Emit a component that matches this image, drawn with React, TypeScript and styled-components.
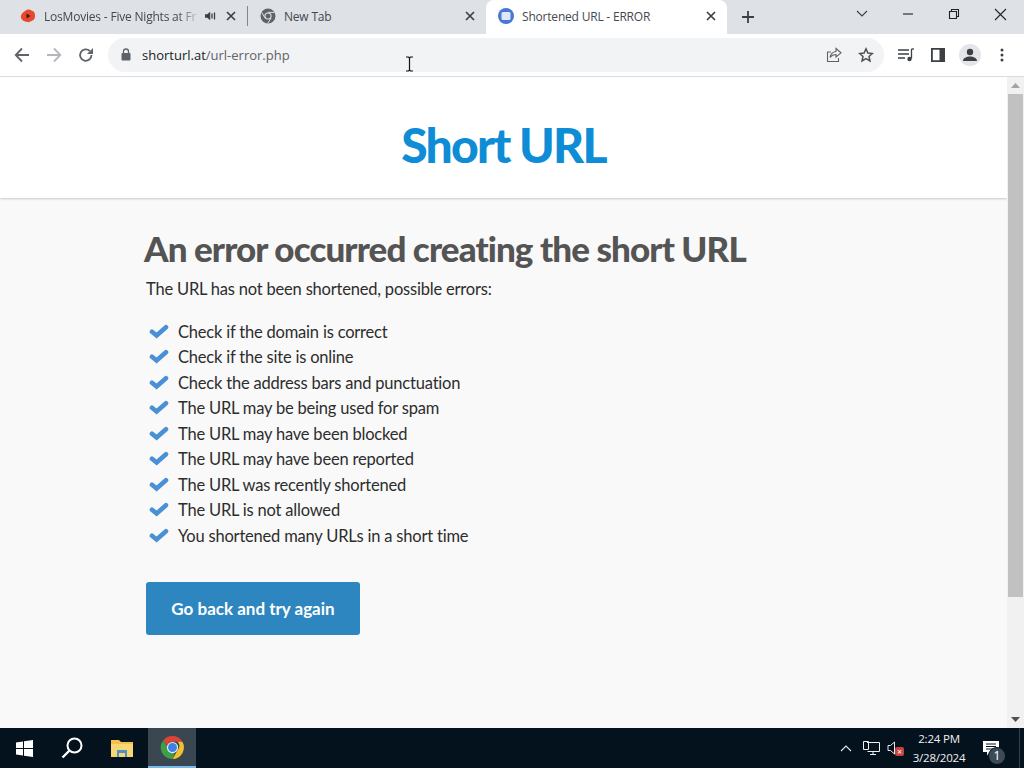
import styled, { createGlobalStyle } from "styled-components";

const errors = [
  "Check if the domain is correct",
  "Check if the site is online",
  "Check the address bars and punctuation",
  "The URL may be being used for spam",
  "The URL may have been blocked",
  "The URL may have been reported",
  "The URL was recently shortened",
  "The URL is not allowed",
  "You shortened many URLs in a short time",
];

const CloseIcon = ({ color = "#3c4043" }: { color?: string }) => (
  <svg width="10" height="10" viewBox="0 0 10 10">
    <path d="M1 1l8 8M9 1l-8 8" stroke={color} strokeWidth="1.7" fill="none" />
  </svg>
);

const ChromeLogo = ({ size }: { size: number }) => (
  <svg width={size} height={size} viewBox="0 0 24 24">
    <path d="M12 1a11 11 0 0 1 9.500 5.500H12a5.500 5.500 0 0 0-5.200 3.700L3.300 5A11 11 0 0 1 12 1z" fill="#db4437" />
    <path d="M21.500 6.500A11 11 0 0 1 12 23l4.800-8.200a5.500 5.500 0 0 0 0-8.300z" fill="#f5c02e" />
    <path d="M12 23A11 11 0 0 1 3.300 5l4.800 8.600A5.500 5.500 0 0 0 14 17.200z" fill="#3f9e48" />
    <circle cx="12" cy="12" r="5.400" fill="#e9eef5" />
    <circle cx="12" cy="12" r="4.300" fill="#3f7fe6" />
  </svg>
);

const App = () => {
  return (
    <Screen>
      <GlobalStyle />
      <TabStrip>
        <Tab $width={239}>
          <svg width="16" height="16" viewBox="0 0 16 16">
            <path d="M8.500 1.500c2 0 2.500 1 4 1.500s2.500 2 2.500 4.500-.5 4-2.500 5-3 2-5 1.500-4-.5-5.500-2.500S.5 8.500 1.500 6.500s2-2.500 3.500-3.500 2-1.500 3.500-1.500z" fill="#e8492e" />
            <path d="M6.500 5.500v5l4-2.500z" fill="#3a1a12" />
          </svg>
          <TabTitle $fade>LosMovies - Five Nights at Fr</TabTitle>
          <svg width="11" height="10" viewBox="0 0 11 10">
            <path d="M0 3.300h2.200L5.200.8v8.400L2.200 6.700H0z" fill="#3c4043" />
            <path d="M7 2.500v5M9.500 1.500v7" stroke="#3c4043" strokeWidth="1.300" />
          </svg>
          <CloseSlot><CloseIcon /></CloseSlot>
        </Tab>
        <TabDivider />
        <Tab $width={238}>
          <svg width="16" height="16" viewBox="0 0 16 16">
            <circle cx="8" cy="8" r="7.500" fill="#5f6368" />
            <circle cx="8" cy="8" r="3.600" fill="#dee1e6" />
            <circle cx="8" cy="8" r="2.500" fill="#5f6368" />
            <path d="M8 4.400h6.400M5 10l-3.200-5.500M11 10l-3.200 5.300" stroke="#dee1e6" strokeWidth="1" />
          </svg>
          <TabTitle>New Tab</TabTitle>
          <CloseSlot><CloseIcon /></CloseSlot>
        </Tab>
        <ActiveTab>
          <svg width="16" height="16" viewBox="0 0 16 16">
            <circle cx="8" cy="8" r="8" fill="#4a76d8" />
            <rect x="3.500" y="4" width="9" height="8" rx="1.500" fill="#dfe8fb" />
          </svg>
          <TabTitle>Shortened URL - ERROR</TabTitle>
          <CloseSlot><CloseIcon /></CloseSlot>
        </ActiveTab>
        <NewTabButton>
          <svg width="14" height="14" viewBox="0 0 14 14">
            <path d="M7 1v12M1 7h12" stroke="#3c4043" strokeWidth="1.800" />
          </svg>
        </NewTabButton>
        <WindowControls>
          <WindowButton>
            <svg width="12" height="8" viewBox="0 0 12 8">
              <path d="M1 1l5 5 5-5" stroke="#3c4043" strokeWidth="1.100" fill="none" />
            </svg>
          </WindowButton>
          <WindowButton>
            <svg width="12" height="12" viewBox="0 0 12 12">
              <path d="M1 6h10" stroke="#222" strokeWidth="1.100" />
            </svg>
          </WindowButton>
          <WindowButton>
            <svg width="12" height="12" viewBox="0 0 12 12">
              <path d="M1.500 3.500h7v7h-7zM3.500 3.500v-2h7v7h-2" stroke="#222" strokeWidth="1.100" fill="none" />
            </svg>
          </WindowButton>
          <WindowButton>
            <svg width="13" height="13" viewBox="0 0 13 13">
              <path d="M1 1l11 11M12 1L1 12" stroke="#222" strokeWidth="1.100" />
            </svg>
          </WindowButton>
        </WindowControls>
      </TabStrip>

      <Toolbar>
        <NavButton>
          <svg width="16" height="16" viewBox="0 0 16 16">
            <path d="M15 8H2M8 1.500L1.700 8 8 14.500" stroke="#5f6368" strokeWidth="1.800" fill="none" />
          </svg>
        </NavButton>
        <NavButton>
          <svg width="16" height="16" viewBox="0 0 16 16">
            <path d="M1 8h13M8 1.500L14.300 8 8 14.500" stroke="#b4b7bb" strokeWidth="1.800" fill="none" />
          </svg>
        </NavButton>
        <NavButton>
          <svg width="16" height="16" viewBox="0 0 16 16">
            <path d="M13.500 8a5.700 5.700 0 1 1-1.700-4" stroke="#5f6368" strokeWidth="1.800" fill="none" />
            <path d="M15 1v6H9z" fill="#5f6368" />
          </svg>
        </NavButton>
        <Omnibox>
          <svg width="10" height="13" viewBox="0 0 10 13">
            <path d="M2.500 5V3.500a2.500 2.500 0 0 1 5 0V5" stroke="#5f6368" strokeWidth="1.300" fill="none" />
            <rect x="0.500" y="5" width="9" height="7.500" rx="1" fill="#5f6368" />
          </svg>
          <Url>shorturl.at<UrlPath>/url-error.php</UrlPath></Url>
          <OmniboxActions>
            <svg width="16" height="16" viewBox="0 0 16 16">
              <path d="M5 5H1.500v9.500h11V11" stroke="#5f6368" strokeWidth="1.100" fill="none" />
              <path d="M10 1.500l5 4.300-5 4.200V7.500c-3 0-4.500 1-6 3 .5-3.500 2.500-5.500 6-6z" stroke="#5f6368" strokeWidth="1.100" fill="none" />
            </svg>
            <svg width="16" height="16" viewBox="0 0 16 16">
              <path d="M8 1.800l1.900 4.200 4.500.5-3.400 3 1 4.500L8 11.700 4 14l1-4.500-3.400-3 4.500-.5z" stroke="#4d5156" strokeWidth="1.500" fill="none" />
            </svg>
          </OmniboxActions>
        </Omnibox>
        <ToolbarIcons>
          <ToolbarIcon>
            <svg width="16" height="14" viewBox="0 0 16 14">
              <path d="M0 2h11M0 6h11M0 10h7" stroke="#3c4043" strokeWidth="1.300" />
              <path d="M13.500 1v9.500" stroke="#3c4043" strokeWidth="1.300" />
              <path d="M13.500 1H16" stroke="#3c4043" strokeWidth="1.300" />
              <circle cx="11.500" cy="11" r="2.200" fill="#3c4043" />
            </svg>
          </ToolbarIcon>
          <ToolbarIcon>
            <svg width="14" height="14" viewBox="0 0 14 14">
              <path d="M0 0h14v14H0zM1.800 1.800v10.400h6.700V1.800z" fill="#3c4043" fillRule="evenodd" />
            </svg>
          </ToolbarIcon>
          <Avatar>
            <svg width="14" height="14" viewBox="0 0 14 14">
              <circle cx="7" cy="4" r="3.200" fill="#3c4043" />
              <path d="M0 13c0-3 3.500-4.500 7-4.500S14 10 14 13z" fill="#3c4043" />
            </svg>
          </Avatar>
          <ToolbarIcon>
            <svg width="4" height="14" viewBox="0 0 4 14">
              <circle cx="2" cy="2" r="1.500" fill="#3c4043" />
              <circle cx="2" cy="7" r="1.500" fill="#3c4043" />
              <circle cx="2" cy="12" r="1.500" fill="#3c4043" />
            </svg>
          </ToolbarIcon>
        </ToolbarIcons>
        <TextCursor>
          <svg width="9" height="16" viewBox="0 0 9 16">
            <path d="M1 1h2.500L4.500 2l1-1H8M1 15h2.500l1-1 1 1H8M4.500 2v12" stroke="#111" strokeWidth="1.200" fill="none" />
          </svg>
        </TextCursor>
      </Toolbar>

      <Viewport>
        <Page>
          <Header>
            <Logo>Short URL</Logo>
          </Header>
          <Content>
            <Title>An error occurred creating the short URL</Title>
            <Lead>The URL has not been shortened, possible errors:</Lead>
            <ErrorList>
              {errors.map((error) => (
                <ErrorItem key={error}>
                  <svg width="20" height="15" viewBox="0 0 20 15">
                    <path d="M3 7.800L7.600 11.500 17 3.300" stroke="#4a90d6" strokeWidth="4.600" strokeLinecap="round" strokeLinejoin="miter" fill="none" />
                  </svg>
                  {error}
                </ErrorItem>
              ))}
            </ErrorList>
            <BackButton>Go back and try again</BackButton>
          </Content>
        </Page>
        <Scrollbar>
          <ScrollArrow>
            <svg width="9" height="5" viewBox="0 0 9 5"><path d="M4.500 0L9 5H0z" fill="#a3a3a3" /></svg>
          </ScrollArrow>
          <ScrollThumb />
          <ScrollArrow>
            <svg width="9" height="5" viewBox="0 0 9 5"><path d="M0 0h9L4.500 5z" fill="#505050" /></svg>
          </ScrollArrow>
        </Scrollbar>
      </Viewport>

      <Taskbar>
        <TaskButton $width={48}>
          <svg width="17" height="17" viewBox="0 0 17 17">
            <path d="M0 2.400L7 1.400V8H0zM8 1.300L17 0v8H8zM0 9h7v6.600l-7-1zM8 9h9v8l-9-1.300z" fill="#fff" />
          </svg>
        </TaskButton>
        <TaskButton $width={48}>
          <svg width="22" height="22" viewBox="0 0 22 22">
            <circle cx="13.500" cy="8.500" r="7" stroke="#fff" strokeWidth="2" fill="none" />
            <path d="M8.500 13.500L1.500 20.500" stroke="#fff" strokeWidth="2.400" />
          </svg>
        </TaskButton>
        <TaskButton $width={52}>
          <svg width="22" height="18" viewBox="0 0 22 18">
            <path d="M0 1h8l2 2h12v14H0z" fill="#f3c04f" />
            <path d="M0 5h22v13H0z" fill="#f7d774" />
            <path d="M6 11h10v7h-2v-4H8v4H6z" fill="#4f90c8" />
          </svg>
        </TaskButton>
        <ActiveTaskButton>
          <ChromeLogo size={25} />
        </ActiveTaskButton>
        <Tray>
          <svg width="12" height="7" viewBox="0 0 12 7">
            <path d="M1 6l5-5 5 5" stroke="#e8e8e8" strokeWidth="1.100" fill="none" />
          </svg>
          <NetworkSlot>
            <svg width="17" height="14" viewBox="0 0 17 14">
              <path d="M4 1.500h12.500v9h-12M10 10.500v3M7 13.500h6M.5.500h5v8h-5z" stroke="#f0f0f0" strokeWidth="1" fill="#06141f" />
            </svg>
          </NetworkSlot>
          <VolumeIcon>
            <svg width="16" height="14" viewBox="0 0 16 14">
              <path d="M1 4.500h2.500L7.500 1v12l-4-3.500H1z" stroke="#e8e8e8" strokeWidth="1" fill="none" />
            </svg>
            <MutedBadge>×</MutedBadge>
          </VolumeIcon>
          <Clock>
            <span>2:24 PM</span>
            <span>3/28/2024</span>
          </Clock>
          <NotificationIcon>
            <svg width="16" height="15" viewBox="0 0 16 15">
              <path d="M0 0h16v11H7l-3 3.500V11H0z" fill="#fff" />
              <path d="M3 3h10M3 5.500h10M3 8h7" stroke="#06141f" strokeWidth="1" />
            </svg>
            <NotificationCount>1</NotificationCount>
          </NotificationIcon>
          <ShowDesktop />
        </Tray>
      </Taskbar>
    </Screen>
  );
};

export default App;

const GlobalStyle = createGlobalStyle`
  html, body {
    margin: 0;
    padding: 0;
    height: 100%;
    overflow: hidden;
  }
  * {
    box-sizing: border-box;
  }
`;
const Screen = styled.div`
  width: 1024px;
  height: 768px;
  display: flex;
  flex-direction: column;
  font-family: "Noto Sans", "Liberation Sans", sans-serif;
`;
const TabStrip = styled.div`
  height: 34px;
  flex: none;
  padding-left: 8px;
  display: flex;
  align-items: stretch;
  background: #dee1e6;
  font-family: "Open Sans", "Noto Sans", sans-serif;
`;
const Tab = styled.div<{ $width: number }>`
  width: ${(p) => p.$width}px;
  flex: none;
  padding: 0 8px 2px 12px;
  display: flex;
  align-items: center;
`;
const ActiveTab = styled(Tab).attrs({ $width: 241 })`
  background: #ffffff;
  border-radius: 8px 8px 0 0;
`;
const TabDivider = styled.div`
  width: 1px;
  height: 20px;
  margin-bottom: 2px;
  align-self: center;
  flex: none;
  background: #80868b;
`;
const TabTitle = styled.span<{ $fade?: boolean }>`
  flex: 1;
  min-width: 0;
  margin-left: 8px;
  font-size: 12px;
  letter-spacing: -0.2px;
  color: #45494e;
  white-space: nowrap;
  ${(p) =>
    p.$fade &&
    `
    -webkit-mask-image: linear-gradient(to right, #000 85%, transparent 100%);
    margin-right: 4px;
  `}
`;
const CloseSlot = styled.span`
  width: 16px;
  margin-left: 7px;
  flex: none;
  display: flex;
  align-items: center;
  justify-content: center;
`;
const NewTabButton = styled.div`
  width: 42px;
  flex: none;
  display: flex;
  align-items: center;
  justify-content: center;
`;
const WindowControls = styled.div`
  margin-left: auto;
  padding-right: 1px;
  display: flex;
  align-items: flex-start;
`;
const WindowButton = styled.div`
  width: 46px;
  height: 28px;
  display: flex;
  align-items: center;
  justify-content: center;
`;
const Toolbar = styled.div`
  position: relative;
  height: 43px;
  flex: none;
  padding: 4px 0 5px 6px;
  display: flex;
  align-items: center;
  background: #ffffff;
  border-bottom: 1px solid #dadce0;
`;
const NavButton = styled.div`
  width: 32px;
  height: 32px;
  flex: none;
  display: flex;
  align-items: center;
  justify-content: center;
`;
const Omnibox = styled.div`
  width: 776px;
  height: 34px;
  margin-left: 6px;
  padding-left: 13px;
  flex: none;
  display: flex;
  align-items: center;
  background: #f1f3f4;
  border-radius: 17px;
`;
const Url = styled.span`
  margin-left: 11px;
  font-family: "Open Sans", "Noto Sans", sans-serif;
  font-size: 13px;
  color: #202124;
`;
const UrlPath = styled.span`
  color: #5f6368;
`;
const OmniboxActions = styled.div`
  margin-left: auto;
  padding-right: 10px;
  display: flex;
  gap: 16px;
`;
const ToolbarIcons = styled.div`
  flex: 1;
  display: flex;
  align-items: center;
  padding-left: 6px;
`;
const ToolbarIcon = styled.div`
  width: 32px;
  height: 32px;
  display: flex;
  align-items: center;
  justify-content: center;
`;
const Avatar = styled(ToolbarIcon)`
  width: 22px;
  height: 22px;
  margin: 0 5px;
  border-radius: 50%;
  background: #e3e5e8;
`;
const TextCursor = styled.div`
  position: absolute;
  left: 405px;
  top: 22px;
  display: flex;
`;
const Viewport = styled.div`
  flex: 1;
  min-height: 0;
  display: flex;
`;
const Page = styled.main`
  flex: 1;
  min-width: 0;
  display: flex;
  flex-direction: column;
  background: #f9f9f9;
`;
const Header = styled.header`
  height: 121px;
  padding-top: 15px;
  flex: none;
  display: flex;
  align-items: center;
  justify-content: center;
  background: #ffffff;
  box-shadow: 0 1px 2px rgba(0, 0, 0, 0.2);
`;
const Logo = styled.div`
  font-family: Lato, sans-serif;
  font-size: 48px;
  line-height: 60px;
  font-weight: 900;
  letter-spacing: -1.8px;
  color: #0e8dd6;
`;
const Content = styled.div`
  padding: 28px 0 0 144px;
  display: flex;
  flex-direction: column;
  align-items: flex-start;
`;
const Title = styled.h1`
  margin: 0;
  font-family: Lato, sans-serif;
  font-size: 35px;
  line-height: 44px;
  font-weight: 900;
  letter-spacing: -0.9px;
  color: #545454;
`;
const Lead = styled.p`
  margin: 7px 0 0 2px;
  font-family: Lato, sans-serif;
  font-size: 16.5px;
  line-height: 24px;
  letter-spacing: -0.2px;
  color: #2d2d2d;
`;
const ErrorList = styled.ul`
  margin: 18px 0 0 2px;
  padding: 0;
  list-style: none;
`;
const ErrorItem = styled.li`
  height: 25.5px;
  display: flex;
  align-items: center;
  gap: 9px;
  font-family: Lato, sans-serif;
  font-size: 16.5px;
  letter-spacing: -0.2px;
  color: #2d2d2d;
  svg {
    flex: none;
    margin: -1px 0 0 3px;
  }
`;
const BackButton = styled.button`
  width: 214px;
  height: 53px;
  margin: 33px 0 0 2px;
  border: none;
  border-radius: 3px;
  background: #2e86c1;
  color: #ffffff;
  font-family: Lato, sans-serif;
  font-size: 17px;
  font-weight: 700;
`;
const Scrollbar = styled.div`
  width: 17px;
  flex: none;
  display: flex;
  flex-direction: column;
  background: #f1f1f1;
`;
const ScrollArrow = styled.div`
  height: 17px;
  flex: none;
  display: flex;
  align-items: center;
  justify-content: center;
`;
const ScrollThumb = styled.div`
  height: 503px;
  margin: 0 1px auto;
  background: #c1c1c1;
`;
const Taskbar = styled.footer`
  height: 40px;
  flex: none;
  display: flex;
  align-items: stretch;
  background: #04121d;
`;
const TaskButton = styled.div<{ $width: number }>`
  width: ${(p) => p.$width}px;
  flex: none;
  display: flex;
  align-items: center;
  justify-content: center;
`;
const ActiveTaskButton = styled(TaskButton).attrs({ $width: 48 })`
  background: #3a4650;
  border-bottom: 2px solid #76b9ed;
`;
const Tray = styled.div`
  margin-left: auto;
  display: flex;
  align-items: center;
  color: #f0f0f0;
  svg {
    flex: none;
  }
`;
const NetworkSlot = styled.div`
  margin-left: 11px;
  display: flex;
`;
const VolumeIcon = styled.div`
  position: relative;
  width: 22px;
  margin-left: 7px;
  display: flex;
`;
const MutedBadge = styled.span`
  position: absolute;
  left: 8px;
  top: 6px;
  width: 9px;
  height: 9px;
  border-radius: 2px;
  background: #c9423f;
  color: #fff;
  font-size: 9px;
  line-height: 9px;
  text-align: center;
`;
const Clock = styled.div`
  width: 60px;
  display: flex;
  flex-direction: column;
  align-items: center;
  gap: 3px;
  font-family: "Open Sans", sans-serif;
  font-size: 11.5px;
  line-height: 16px;
  letter-spacing: -0.2px;
`;
const NotificationIcon = styled.div`
  position: relative;
  width: 43px;
  margin-left: 7px;
  padding-left: 7px;
  display: flex;
`;
const NotificationCount = styled.span`
  position: absolute;
  left: 12px;
  top: 6px;
  width: 18px;
  height: 18px;
  border-radius: 50%;
  background: #3c4a55;
  border: 1px solid #04121d;
  color: #fff;
  font-size: 12px;
  line-height: 16px;
  text-align: center;
`;
const ShowDesktop = styled.div`
  width: 1px;
  height: 40px;
  margin-right: 4px;
  background: #33414c;
`;
